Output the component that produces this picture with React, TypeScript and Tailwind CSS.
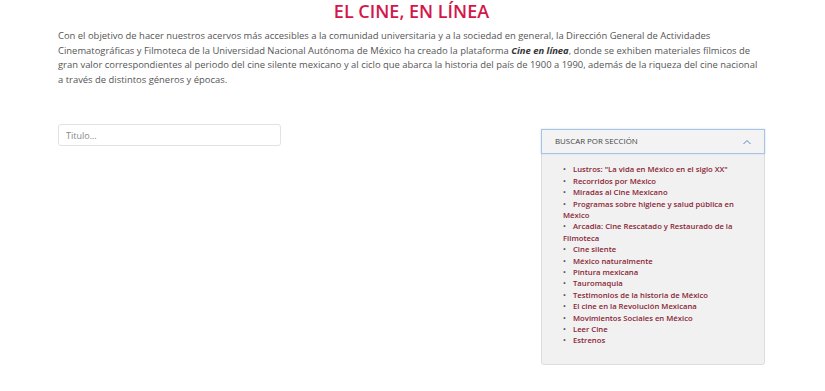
const SECTIONS = [
  'Lustros: "La vida en México en el siglo XX"',
  'Recorridos por México',
  'Miradas al Cine Mexicano',
  'Programas sobre higiene y salud pública en México',
  'Arcadia: Cine Rescatado y Restaurado de la Filmoteca',
  'Cine silente',
  'México naturalmente',
  'Pintura mexicana',
  'Tauromaquia',
  'Testimonios de la historia de México',
  'El cine en la Revolución Mexicana',
  'Movimientos Sociales en México',
  'Leer Cine',
  'Estrenos',
]

export default function App() {
  return (
    <div className="w-[825px] h-[391px] bg-white font-['Open_Sans',sans-serif] overflow-hidden">
      <div className="pl-[58px] pr-[60px]">
        <h1 className="text-center text-[18px] leading-[22px] font-semibold text-[#d3174a]">
          EL CINE, EN LÍNEA
        </h1>
        <p className="mt-[7px] pr-[5px] text-[9.43px] leading-[14.6px] text-[#555]">
          Con el objetivo de hacer nuestros acervos más accesibles a la comunidad universitaria y a la sociedad en general, la Dirección General de Actividades Cinematográficas y Filmoteca de la Universidad Nacional Autónoma de México ha creado la plataforma <b className="italic font-bold text-[#333]">Cine en línea</b>, donde se exhiben materiales fílmicos de gran valor correspondientes al periodo del cine silente mexicano y al ciclo que abarca la historia del país de 1900 a 1990, además de la riqueza del cine nacional a través de distintos géneros y épocas.
        </p>
        <div className="mt-[37px] flex justify-between items-start">
          <input
            placeholder="Titulo..."
            className="w-[223px] h-[22px] border border-[#e2e2e2] rounded-[3px] px-[7px] text-[9px] text-[#555] placeholder:text-[#888] outline-none"
          />
          <div className="mt-[5px] w-[224px] h-[236px] bg-[#f1f1f1] border border-[#dcdcdc] rounded-[3px] flex flex-col">
            <div className="h-[25px] -m-px border border-[#a8c3e6] bg-[#f3f3f3] flex items-center justify-between pl-[13px] pr-[12px] shadow-[0_0_2px_#c9daf0]">
              <span className="text-[7.9px] text-[#444]">BUSCAR POR SECCIÓN</span>
              <svg width="10" height="6" viewBox="0 0 10 6" fill="none" stroke="#5b86c4" strokeWidth="1">
                <path d="M1.5 5 L5 1.5 L8.5 5" />
              </svg>
            </div>
            <ul className="mt-[11px] pl-[21px] pr-[10px] text-[7.7px] leading-[11.4px] font-semibold text-[#8a2535]">
              {SECTIONS.map((s) => (
                <li key={s}>
                  <span className="inline-block w-[10px] text-[#555]">•</span>
                  {s}
                </li>
              ))}
            </ul>
          </div>
        </div>
      </div>
    </div>
  )
}
